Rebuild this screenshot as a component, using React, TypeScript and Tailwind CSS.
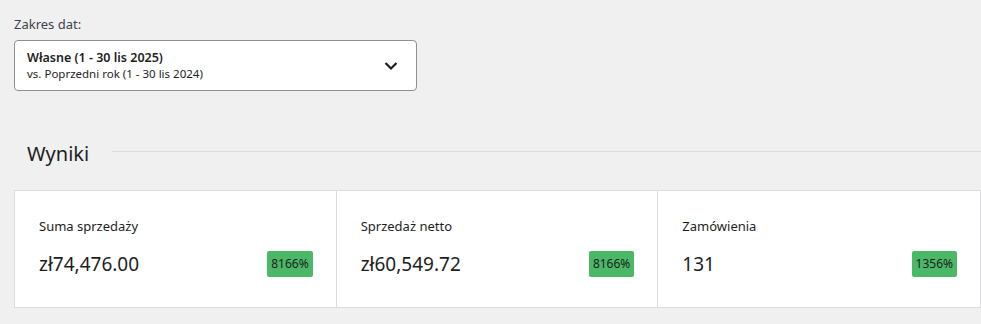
import React from 'react';

interface Stat {
  label: string;
  value: string;
  delta: string;
}

const stats: Stat[] = [
  { label: 'Suma sprzedaży', value: 'zł74,476.00', delta: '8166%' },
  { label: 'Sprzedaż netto', value: 'zł60,549.72', delta: '8166%' },
  { label: 'Zamówienia', value: '131', delta: '1356%' },
];

export default function App() {
  return (
    <div
      className="w-[981px] h-[324px] overflow-hidden bg-[#f0f0f1] pt-[15px] px-[14px] text-[#1e1e1e]"
      style={{ fontFamily: '"Noto Sans", "Open Sans", sans-serif' }}
    >
      {/* Date range picker */}
      <div className="text-[13px] leading-[18px] text-[#3c434a] mb-[7px]">Zakres dat:</div>
      <button className="w-[403px] h-[51px] bg-white border border-[#8c8f94] rounded-[4px] pl-[12px] pr-[18px] flex items-center justify-between text-left">
        <div className="flex flex-col">
          <span className="text-[12.5px] leading-[16px] font-semibold">Własne (1 - 30 lis 2025)</span>
          <span className="text-[11.5px] leading-[16px]">vs. Poprzedni rok (1 - 30 lis 2024)</span>
        </div>
        <svg width="14" height="10" viewBox="0 0 14 10" className="mt-[1px]">
          <polyline points="1.5,2 7,7.5 12.5,2" fill="none" stroke="#1e1e1e" strokeWidth="2.2" />
        </svg>
      </button>

      {/* Section heading */}
      <div className="flex items-start mt-[49px] pl-[13px] mr-[-14px]">
        <h2 className="w-[85px] text-[20px] leading-[28px] font-normal">Wyniki</h2>
        <div className="flex-1 h-px bg-[#dcdcde] mt-[11px]" />
      </div>

      {/* Summary cards */}
      <div className="mt-[22px] w-[967px] h-[118px] grid grid-cols-3 bg-white border border-[#dcdcde]">
        {stats.map((s, i) => (
          <div
            key={s.label}
            className={`pt-[26px] pl-[24px] pr-[23px] ${i < 2 ? 'border-r border-[#dcdcde]' : ''}`}
          >
            <div className="text-[13px] leading-[18px]">{s.label}</div>
            <div className="mt-[16px] flex items-center justify-between h-[26px]">
              <span className="text-[19px] leading-[28px]">{s.value}</span>
              <span className="h-[26px] px-[4px] flex items-center bg-[#4ab866] rounded-[2px] text-[12px] text-[#1e1e1e]">
                {s.delta}
              </span>
            </div>
          </div>
        ))}
      </div>
    </div>
  );
}
